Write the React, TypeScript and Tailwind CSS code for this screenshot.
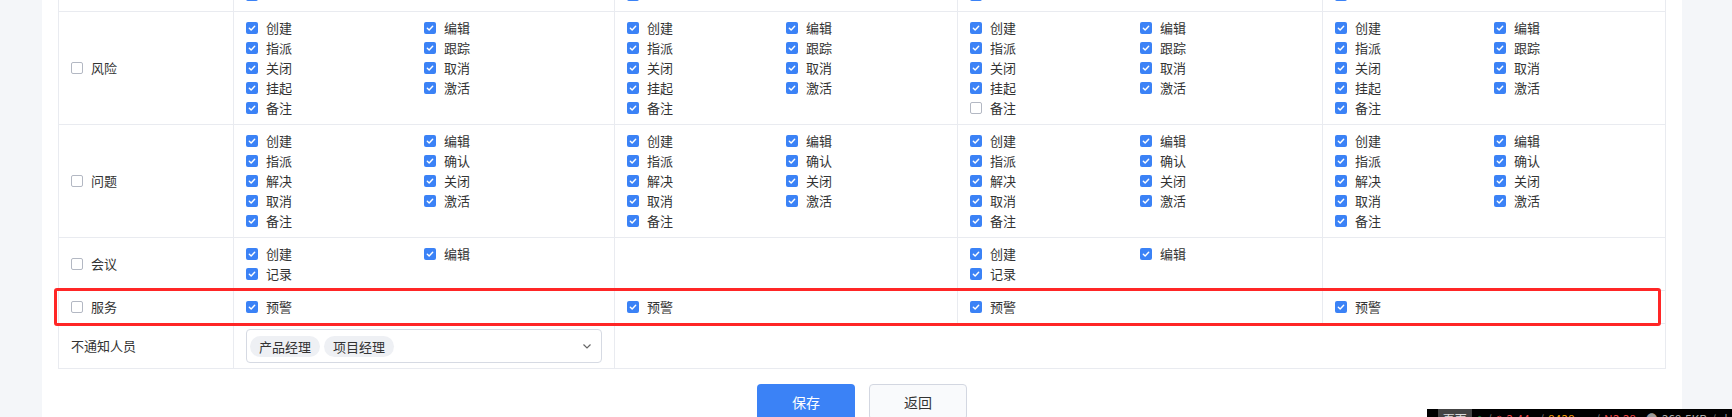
import React from "react";

type Item = { label: string; checked?: boolean };

const riskItems = ["创建", "编辑", "指派", "跟踪", "关闭", "取消", "挂起", "激活", "备注"];
const issueItems = ["创建", "编辑", "指派", "确认", "解决", "关闭", "取消", "激活", "备注"];
const meetItems = ["创建", "编辑", "记录"];

const all = (labels: string[]): Item[] => labels.map((label) => ({ label, checked: true }));

const rows: { name: string; cells: Item[][] }[] = [
    {
        name: "风险",
        cells: [
            all(riskItems),
            all(riskItems),
            riskItems.map((label) => ({ label, checked: label !== "备注" })),
            all(riskItems),
        ],
    },
    { name: "问题", cells: [all(issueItems), all(issueItems), all(issueItems), all(issueItems)] },
    { name: "会议", cells: [all(meetItems), [], all(meetItems), []] },
    { name: "服务", cells: [all(["预警"]), all(["预警"]), all(["预警"]), all(["预警"])] },
];

const cols = "grid grid-cols-[175px_381px_343px_365px_343px] border-b border-[#e9ebf0]";

const Box = ({ checked }: { checked?: boolean }) =>
    checked ? (
        <span className="flex items-center justify-center w-3 h-3 shrink-0 rounded-[2px] bg-[#3b82f6]">
            <svg width="10" height="10" viewBox="0 0 12 12">
                <path d="M2.8 6.3 L5 8.4 L9.2 3.8" fill="none" stroke="#fff" strokeWidth="1.7" strokeLinecap="round" strokeLinejoin="round" />
            </svg>
        </span>
    ) : (
        <span className="w-3 h-3 shrink-0 rounded-[2px] border border-[#b3b8c3] bg-white" />
    );

const Check = ({ item }: { item: Item }) => (
    <div className="flex items-center gap-2 h-5">
        <Box checked={item.checked} />
        <span>{item.label}</span>
    </div>
);

const Cell = ({ items }: { items: Item[] }) => (
    <div className="border-r border-[#e9ebf0] px-3 py-[6px]">
        <div className="grid grid-cols-2">
            {items.map((item, i) => (
                <Check key={i} item={item} />
            ))}
        </div>
    </div>
);

// last line of the row above, only the box bottoms peek in
const PeekCell = () => (
    <div className="border-r border-[#e9ebf0] px-3 py-[6px]">
        <div className="flex items-center h-5">
            <Box checked />
        </div>
    </div>
);

const App = () => {
    return (
        <div
            className="relative h-[417px] w-full overflow-hidden bg-[#f4f6f9] text-[13px] leading-5 text-[#333]"
            style={{ fontFamily: '"Noto Sans CJK SC", "Noto Sans", sans-serif' }}
        >
            <div className="ml-[42px] w-[1640px] h-full bg-white pl-4 flex flex-col">
                <div className="w-[1608px] border-l border-[#e9ebf0] -mt-[21px]">
                    <div className={cols}>
                        <div className="border-r border-[#e9ebf0]" />
                        <PeekCell />
                        <PeekCell />
                        <PeekCell />
                        <PeekCell />
                    </div>

                    {rows.map((row) => (
                        <div key={row.name} className={cols}>
                            <div className="flex items-center gap-2 px-3 border-r border-[#e9ebf0]">
                                <Box />
                                <span>{row.name}</span>
                            </div>
                            {row.cells.map((items, i) => (
                                <Cell key={i} items={items} />
                            ))}
                        </div>
                    ))}

                    <div className="grid grid-cols-[175px_381px_1051px] border-b border-[#e9ebf0]">
                        <div className="flex items-center px-3 border-r border-[#e9ebf0]">不通知人员</div>
                        <div className="px-3 py-[5px] border-r border-[#e9ebf0]">
                            <div className="flex items-center h-[34px] rounded-[4px] border border-[#d6dae3] pl-[3px] pr-[8px]">
                                <div className="flex flex-1 gap-1">
                                    <span className="h-[21px] leading-[21px] px-[9px] rounded-full bg-[#eef0f4]">产品经理</span>
                                    <span className="h-[21px] leading-[21px] px-[9px] rounded-full bg-[#eef0f4]">项目经理</span>
                                </div>
                                <svg width="12" height="12" viewBox="0 0 12 12">
                                    <path d="M2.5 4.5 L6 8 L9.5 4.5" fill="none" stroke="#666" strokeWidth="1.2" />
                                </svg>
                            </div>
                        </div>
                        <div className="border-r border-[#e9ebf0]" />
                    </div>
                </div>

                <div className="flex justify-center gap-[14px] mt-[15px] pr-4">
                    <button className="w-[98px] h-[36px] rounded-[4px] bg-[#3b82f6] text-white text-[14px]">保存</button>
                    <button className="w-[98px] h-[36px] rounded-[4px] border border-[#d3d7e1] bg-[#f9fafc] text-[#333] text-[14px]">
                        返回
                    </button>
                </div>
            </div>

            {/* annotation box */}
            <div className="absolute left-[54px] top-[288px] w-[1607px] h-[38px] rounded-[3px] border-[3px] border-[#ff2626]" />

            {/* devtools strip */}
            <div className="absolute left-[1427px] right-0 top-[409px] h-[20px] bg-black flex items-center gap-[4px] pl-[3px] text-[12px] whitespace-nowrap">
                <span className="text-[#ccc]">›</span>
                <span className="px-[5px] bg-[#444] text-[#ddd]">页面</span>
                <svg width="13" height="13" viewBox="0 0 14 14">
                    <path d="M7 1 L12.5 4 V10 L7 13 L1.5 10 V4 Z" fill="none" stroke="#22c55e" strokeWidth="1.4" />
                </svg>
                <span className="text-[#777]">/</span>
                <svg width="12" height="12" viewBox="0 0 12 12">
                    <circle cx="6" cy="6" r="5" fill="none" stroke="#ef4444" strokeWidth="1.4" />
                </svg>
                <span className="text-[#ef4444]">3.44s</span>
                <span className="text-[#777]">/</span>
                <span className="text-[#f59e0b]">8438ms</span>
                <span className="text-[#777]">/</span>
                <span className="text-[#ef4444]">N3.38s</span>
                <span className="text-[#999]">◓</span>
                <span className="text-[#aaa]">369.5KB</span>
                <span className="text-[#777]">/</span>
                <span className="text-[#aaa]">↓</span>
            </div>
        </div>
    );
};

export default App;
